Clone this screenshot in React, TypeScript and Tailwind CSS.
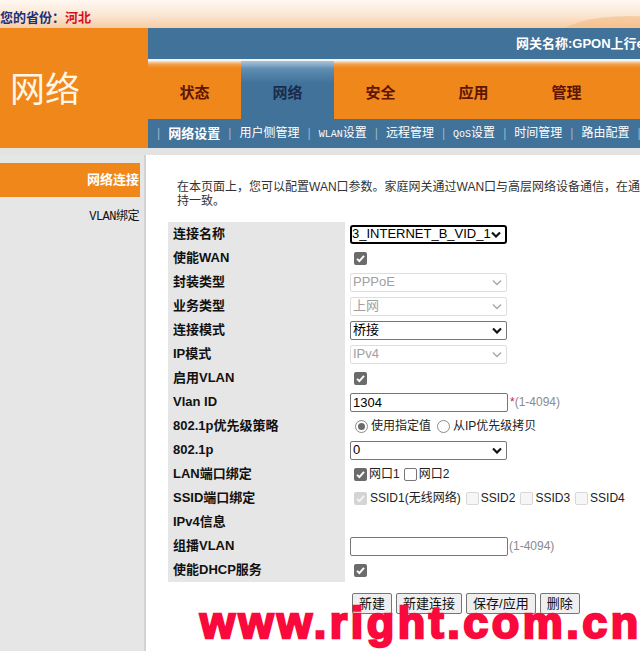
import React from 'react';

const ORANGE = 'bg-[#ef871b]';
const TAB_ORANGE = 'bg-[linear-gradient(to_bottom,#fde3c8_0px,#f3a350_3px,#ef871b_7px)]';

const Chevron: React.FC<{ light?: boolean }> = ({ light }) => (
    <svg width="10" height="7" viewBox="0 0 10 7" className="shrink-0">
        <path d="M1 1.5 L5 5.5 L9 1.5" fill="none" stroke={light ? '#a8a8a8' : '#111'} strokeWidth={light ? 1.4 : 2.2} />
    </svg>
);

const Sel: React.FC<{ value: string; disabled?: boolean; focused?: boolean }> = ({ value, disabled, focused }) => {
    const box = focused
        ? 'border-2 border-black rounded-[3px] pl-0'
        : disabled
            ? 'border border-[#dedede] rounded-[2px] pl-[2px]'
            : 'border border-[#767676] rounded-[2px] pl-[2px]';
    return (
        <div className={`w-[157px] h-[19px] flex items-center pr-[4px] bg-white ${box}`}>
            <span className={`flex-1 overflow-hidden whitespace-nowrap text-[13px] leading-[16px] ${disabled ? 'text-[#a0a0a0]' : 'text-black'}`}>{value}</span>
            <Chevron light={disabled} />
        </div>
    );
};

const Check: React.FC<{ checked?: boolean; disabled?: boolean }> = ({ checked, disabled }) => {
    if (checked) {
        return (
            <span className={`inline-flex w-[13px] h-[13px] rounded-[2px] items-center justify-center shrink-0 ${disabled ? 'bg-[#d4d4d4]' : 'bg-[#6b6b6b]'}`}>
                <svg width="11" height="11" viewBox="0 0 11 11">
                    <path d="M2 5.8 L4.4 8.2 L9 2.8" fill="none" stroke={disabled ? '#f4f4f4' : '#fff'} strokeWidth="1.9" />
                </svg>
            </span>
        );
    }
    return (
        <span className={`inline-block w-[13px] h-[13px] rounded-[2px] shrink-0 border ${disabled ? 'border-[#d8d8d8] bg-[#f6f6f6]' : 'border-[#767676] bg-white'}`} />
    );
};

const Radio: React.FC<{ checked?: boolean }> = ({ checked }) => (
    <span className="inline-flex w-[13px] h-[13px] rounded-full border border-[#8a8a8a] bg-white items-center justify-center shrink-0">
        {checked && <span className="w-[7px] h-[7px] rounded-full bg-[#6b6b6b]" />}
    </span>
);

const TextBox: React.FC<{ value?: string }> = ({ value }) => (
    <div className="w-[158px] h-[19px] border border-[#767676] rounded-[2px] bg-white flex items-center pl-[2px] text-[13px] leading-none">
        {value}
    </div>
);

const rows: { label: React.ReactNode; value: React.ReactNode }[] = [
    { label: '连接名称', value: <Sel value="3_INTERNET_B_VID_1304" focused /> },
    { label: '使能WAN', value: <span className="pl-[4px] flex"><Check checked /></span> },
    { label: '封装类型', value: <Sel value="PPPoE" disabled /> },
    { label: '业务类型', value: <Sel value="上网" disabled /> },
    { label: '连接模式', value: <Sel value="桥接" /> },
    { label: 'IP模式', value: <Sel value="IPv4" disabled /> },
    { label: '启用VLAN', value: <span className="pl-[4px] flex"><Check checked /></span> },
    {
        label: 'Vlan ID',
        value: (
            <div className="flex items-center">
                <TextBox value="1304" />
                <span className="text-[#e0103a] text-[12px] ml-[2px]">*</span>
                <span className="text-[#8a8a8a] text-[12px]">(1-4094)</span>
            </div>
        ),
    },
    {
        label: '802.1p优先级策略',
        value: (
            <div className="flex items-center pl-[5px] text-[12px] text-[#222]">
                <Radio checked />
                <span className="ml-[3px]">使用指定值</span>
                <span className="ml-[6px] flex"><Radio /></span>
                <span className="ml-[3px]">从IP优先级拷贝</span>
            </div>
        ),
    },
    { label: '802.1p', value: <Sel value="0" /> },
    {
        label: 'LAN端口绑定',
        value: (
            <div className="flex items-center pl-[4px] text-[12px] text-[#222]">
                <Check checked />
                <span className="ml-[2px]">网口1</span>
                <span className="ml-[4px] flex"><Check /></span>
                <span className="ml-[2px]">网口2</span>
            </div>
        ),
    },
    {
        label: 'SSID端口绑定',
        value: (
            <div className="flex items-center pl-[4px] text-[12px] text-[#222]">
                <Check checked disabled />
                <span className="ml-[3px]">SSID1(无线网络)</span>
                <span className="ml-[5px] flex"><Check disabled /></span>
                <span className="ml-[2px]">SSID2</span>
                <span className="ml-[5px] flex"><Check disabled /></span>
                <span className="ml-[2px]">SSID3</span>
                <span className="ml-[5px] flex"><Check disabled /></span>
                <span className="ml-[2px]">SSID4</span>
            </div>
        ),
    },
    { label: 'IPv4信息', value: null },
    {
        label: '组播VLAN',
        value: (
            <div className="flex items-center">
                <TextBox />
                <span className="text-[#8a8a8a] text-[12px] ml-[1px]">(1-4094)</span>
            </div>
        ),
    },
    { label: '使能DHCP服务', value: <span className="pl-[4px] flex"><Check checked /></span> },
];

// latin bits in the sub nav are half width, like the old bitmap font
const Half: React.FC<{ children: React.ReactNode }> = ({ children }) => <span className="text-[10px]">{children}</span>;

const subNav: React.ReactNode[] = [
    '网络设置',
    '用户侧管理',
    <><Half>WLAN</Half>设置</>,
    '远程管理',
    <><Half>QoS</Half>设置</>,
    '时间管理',
    '路由配置',
];

const tabs = ['状态', '网络', '安全', '应用', '管理'];

export default function App() {
    return (
        <div className="relative w-[640px] h-[651px] overflow-hidden bg-white font-['Liberation_Sans','Noto_Sans_CJK_SC',sans-serif] text-black">
            {/* top strip */}
            <div className="relative h-[28px] bg-[linear-gradient(to_bottom,#fff8f1_0%,#fbe6d2_55%,#f6cda5_100%)] overflow-hidden">
                <div className="absolute right-[-60px] top-[16px] w-[140px] h-[40px] rounded-[50%] bg-[#f3b57a] opacity-50" />
                <div className="absolute left-0 top-[11px] text-[13px] font-bold leading-none whitespace-nowrap">
                    <span className="text-[#1b2f7a]">您的省份：</span>
                    <span className="text-[#d8101c]">河北</span>
                </div>
            </div>

            {/* header */}
            <div className="flex h-[120px]">
                <div className={`w-[148px] ${ORANGE} flex items-center pl-[10px] pb-[3px]`}>
                    <span className="text-[35px] leading-none text-[#fff6e6] font-['Noto_Sans_CJK_SC',sans-serif]">网络</span>
                </div>
                <div className="flex-1 flex flex-col min-w-0">
                    <div className="h-[31px] bg-[#41729a] flex items-center pl-[368px] overflow-hidden">
                        <span className="text-white font-bold text-[13px] whitespace-nowrap">网关名称:GPON上行e8-C</span>
                    </div>
                    <div className={`h-[60px] flex border-t-2 border-[#f4f4f4] ${TAB_ORANGE}`}>
                        {tabs.map((t, i) => (
                            <div
                                key={t}
                                className={`w-[93px] shrink-0 flex items-center justify-center pt-[6px] text-[15px] font-bold ${
                                    i === 1
                                        ? 'bg-[linear-gradient(to_bottom,#a9c6dd_0px,#5f8db2_8px,#41729a_22px)] text-[#1a2c4c]'
                                        : `${TAB_ORANGE} text-[#5e1600]`
                                }`}
                            >
                                {t}
                            </div>
                        ))}
                    </div>
                    <div className="h-[29px] bg-[#41729a] flex items-center pl-[7px] text-white whitespace-nowrap overflow-hidden font-['Liberation_Mono','Noto_Sans_CJK_SC',monospace]">
                        {subNav.map((s, i) => (
                            <React.Fragment key={i}>
                                <span className="text-[#9db6cb] text-[12px] mr-[6px]">|</span>
                                <span
                                    className={`mr-[6px] ${
                                        i === 0 ? "font-bold text-[13px] font-['Liberation_Sans','Noto_Sans_CJK_SC',sans-serif]" : 'text-[12px]'
                                    }`}
                                >
                                    {s}
                                </span>
                            </React.Fragment>
                        ))}
                        <span className="text-[#9db6cb] text-[12px]">|</span>
                    </div>
                </div>
            </div>

            <div className="h-[7px] bg-[#e3e3e3]" />

            {/* body */}
            <div className="flex h-[496px]">
                <div className="w-[146px] shrink-0 bg-[#e6e6e6] border-r-2 border-[#d3d3d3] pt-[8px]">
                    <div className={`h-[34px] w-[140px] ${ORANGE} flex items-center justify-end pr-[1px] text-white font-bold text-[13px]`}>
                        网络连接
                    </div>
                    <div className="w-[140px] text-right pr-[1px] mt-[11px] text-[12px] text-[#111] font-['Liberation_Mono','Noto_Sans_CJK_SC',monospace] tracking-[-0.5px]">
                        VLAN绑定
                    </div>
                </div>
                <div className="flex-1 min-w-0 overflow-hidden pl-[22px] pt-[25px]">
                    <div className="pl-[9px] text-[12px] leading-[14px] text-[#333] whitespace-nowrap">
                        <div>在本页面上，您可以配置WAN口参数。家庭网关通过WAN口与高层网络设备通信，在通信过程中WAN口配置需与上层设备保</div>
                        <div>持一致。</div>
                    </div>
                    <div className="mt-[14px] grid grid-cols-[177px_max-content] whitespace-nowrap">
                        {rows.map((r, i) => (
                            <React.Fragment key={i}>
                                <div className="h-[24px] bg-[#e6e6e6] flex items-center pl-[5px] text-[13px] font-bold text-[#111]">
                                    {r.label}
                                </div>
                                <div className="h-[24px] flex items-center pl-[5px]">{r.value}</div>
                            </React.Fragment>
                        ))}
                    </div>
                    <div className="flex gap-[4px] pl-[184px] mt-[11px]">
                        {['新建', '新建连接', '保存/应用', '删除'].map(b => (
                            <div
                                key={b}
                                className="h-[21px] px-[6px] flex items-center bg-[#efefef] border border-[#767676] rounded-[2px] text-[13px] text-[#111]"
                            >
                                {b}
                            </div>
                        ))}
                    </div>
                </div>
            </div>

            {/* watermark */}
            <div className="absolute left-[200px] top-[600px] text-[45px] leading-none font-bold tracking-[3.5px] text-[#fa0a3c] [-webkit-text-stroke:2.4px_#fa0a3c] whitespace-nowrap font-['Liberation_Sans',sans-serif]">
                www.right.com.cn
            </div>
        </div>
    );
}
